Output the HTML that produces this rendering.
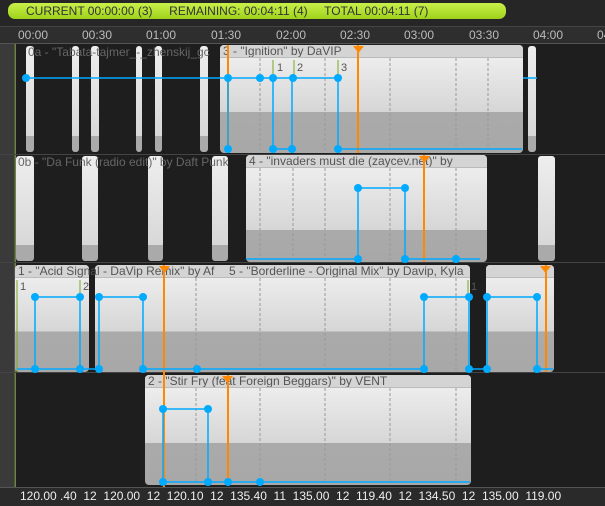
<!DOCTYPE html><html><head><style>
body{margin:0;width:605px;height:506px;background:#1e1e1e;overflow:hidden;font-family:"Liberation Sans","DejaVu Sans",sans-serif;position:relative}
div{position:absolute;box-sizing:border-box}
.c{border-radius:4px;background:linear-gradient(#f2f2f2,#d6d6d6 62%,#aaa 62%,#a8a8a8)}
.c.w2{background:linear-gradient(#f2f2f2,#d6d6d6 70%,#aaa 70%,#a8a8a8)}
.h{left:0;right:0;top:0;height:13px;background:#d4d4d4;border-bottom:1px solid #bbb;font-size:12px;color:#555;white-space:nowrap;overflow:hidden;line-height:13px;padding-left:3px;border-radius:4px 4px 0 0}
.t{background:linear-gradient(#eee,#d8d8d8 85%,#aaa 85%);border-radius:3px}
.rl{font-size:12px;color:#bbb;top:28px}
</style></head><body>
<div style="left:0;top:0;width:605px;height:26px;background:#262626"></div>
<div style="left:8px;top:3px;width:498px;height:16px;border-radius:7px;background:linear-gradient(#c8f04a,#9fd21a);font-size:12px;color:#333;line-height:16px;padding-left:18px;white-space:pre">CURRENT 00:00:00 (3)     REMAINING: 00:04:11 (4)     TOTAL 00:04:11 (7)</div>
<div style="left:0;top:26px;width:605px;height:18px;background:#2e2e2e;border-top:1px solid #444;border-bottom:1px solid #555"></div>
<div class="rl" style="left:18px">00:00</div><div class="rl" style="left:82px">00:30</div><div class="rl" style="left:146px">01:00</div><div class="rl" style="left:211px">01:30</div><div class="rl" style="left:276px">02:00</div><div class="rl" style="left:340px">02:30</div><div class="rl" style="left:404px">03:00</div><div class="rl" style="left:469px">03:30</div><div class="rl" style="left:533px">04:00</div><div class="rl" style="left:597px">04:30</div>
<div style="left:0;top:44px;width:15px;height:443px;background:#3a3a3a;border-right:1px solid #555"></div>
<div style="left:15px;top:44px;width:1px;height:443px;background:#6a8a2a"></div>
<div style="left:0;top:154px;width:605px;height:1px;background:#444"></div>
<div style="left:0;top:262px;width:605px;height:1px;background:#444"></div>
<div style="left:0;top:372px;width:605px;height:1px;background:#444"></div>
<div class="t" style="left:26px;top:46px;width:8px;height:106px"></div>
<div class="t" style="left:72px;top:46px;width:7px;height:106px"></div>
<div class="t" style="left:91px;top:46px;width:8px;height:106px"></div>
<div class="t" style="left:136px;top:46px;width:6px;height:106px"></div>
<div class="t" style="left:155px;top:46px;width:7px;height:106px"></div>
<div class="t" style="left:200px;top:46px;width:8px;height:106px"></div>
<div class="t" style="left:528px;top:46px;width:8px;height:106px"></div>
<div style="left:28px;top:45px;width:192px;font-size:12px;color:#666;white-space:nowrap;overflow:hidden">0a - "Tabata-tajmer_-_zhenskij_gc</div>
<div class="c" style="left:220px;top:45px;width:303px;height:108px"><div class="h">3 - "Ignition" by DaVIP</div></div>
<div class="t" style="left:16px;top:156px;width:18px;height:105px"></div>
<div class="t" style="left:82px;top:156px;width:16px;height:105px"></div>
<div class="t" style="left:148px;top:156px;width:15px;height:105px"></div>
<div class="t" style="left:212px;top:156px;width:16px;height:105px"></div>
<div class="t" style="left:538px;top:156px;width:17px;height:105px"></div>
<div style="left:18px;top:155px;width:228px;font-size:12px;color:#666;white-space:nowrap;overflow:hidden">0b - "Da Funk (radio edit)" by Daft Punk</div>
<div class="c w2" style="left:246px;top:155px;width:241px;height:107px"><div class="h">4 - "invaders must die (zaycev.net)" by</div></div>
<div class="c" style="left:15px;top:265px;width:74px;height:107px"><div class="h"></div></div>
<div class="c" style="left:95px;top:265px;width:375px;height:107px"><div class="h" style="padding-left:134px">5 - "Borderline - Original Mix" by Davip, Kyla</div></div>
<div style="left:18px;top:265px;width:211px;font-size:12px;color:#555;white-space:nowrap;overflow:hidden;line-height:13px">1 - "Acid Signal - DaVip Remix" by Af</div>
<div class="c" style="left:486px;top:265px;width:68px;height:107px"><div class="h"></div></div>
<div class="c" style="left:145px;top:375px;width:326px;height:110px"><div class="h">2 - "Stir Fry (feat Foreign Beggars)" by VENT</div></div>
<svg width="605" height="506" style="position:absolute;left:0;top:0" fill="#0af">
<g stroke="#999" stroke-dasharray="3,2" stroke-width="1">
<line x1="260" y1="58" x2="260" y2="150"/><line x1="325" y1="58" x2="325" y2="150"/><line x1="390" y1="58" x2="390" y2="150"/><line x1="456" y1="58" x2="456" y2="150"/><line x1="488" y1="58" x2="488" y2="150"/>
<line x1="260" y1="168" x2="260" y2="260"/><line x1="293" y1="168" x2="293" y2="260"/><line x1="325" y1="168" x2="325" y2="260"/><line x1="390" y1="168" x2="390" y2="260"/><line x1="456" y1="168" x2="456" y2="260"/>
<line x1="196" y1="278" x2="196" y2="370"/><line x1="260" y1="278" x2="260" y2="370"/><line x1="325" y1="278" x2="325" y2="370"/><line x1="390" y1="278" x2="390" y2="370"/><line x1="456" y1="278" x2="456" y2="370"/>
<line x1="196" y1="388" x2="196" y2="483"/><line x1="260" y1="388" x2="260" y2="483"/><line x1="325" y1="388" x2="325" y2="483"/><line x1="390" y1="388" x2="390" y2="483"/><line x1="456" y1="388" x2="456" y2="483"/>
</g>
<g stroke="#f80" stroke-width="2"><line x1="228" y1="45" x2="228" y2="153"/><line x1="358" y1="45" x2="358" y2="153"/><line x1="424" y1="155" x2="424" y2="262"/><line x1="164" y1="265" x2="164" y2="487"/><line x1="228" y1="375" x2="228" y2="485"/><line x1="546" y1="265" x2="546" y2="372"/></g>
<g fill="#f80"><path d="M353 46h11l-5.5 7z"/><path d="M419 156h11l-5.5 7z"/><path d="M159 266h11l-5.5 7z"/><path d="M222 376h11l-5.5 7z"/><path d="M540 266h11l-5.5 7z"/></g>
<g stroke="#7a2" stroke-width="1"><line x1="273" y1="60" x2="273" y2="78"/><line x1="294" y1="60" x2="294" y2="78"/><line x1="338" y1="60" x2="338" y2="78"/><line x1="17" y1="280" x2="17" y2="372"/><line x1="80" y1="280" x2="80" y2="300"/><line x1="468" y1="280" x2="468" y2="300"/></g>
<g font-size="11" fill="#555" font-family="Liberation Sans"><text x="277" y="71">1</text><text x="297" y="71">2</text><text x="341" y="71">3</text><text x="20" y="290">1</text><text x="83" y="290">2</text><text x="471" y="290">1</text></g>
<g stroke="#0af" stroke-width="1.5" fill="none">
<path d="M26 78H338V149M228 78V149M273 78V149H292V78M338 149H522M523 78H537"/>
<path d="M246 259H358V188H405V259H480M358 188V259"/>
<path d="M17 369H35V297H80V369H99V297H143V369H424V297H469V369H487V297H537V369H553M35 369H80"/>
<path d="M163 482V409H208V482H470M163 482H208"/>
</g>
<g><circle cx="26" cy="78" r="4"/><circle cx="228" cy="78" r="4"/><circle cx="260" cy="78" r="4"/><circle cx="273" cy="78" r="4"/><circle cx="293" cy="78" r="4"/><circle cx="338" cy="78" r="4"/><circle cx="228" cy="149" r="4"/><circle cx="273" cy="149" r="4"/><circle cx="292" cy="149" r="4"/><circle cx="338" cy="149" r="4"/>
<circle cx="358" cy="188" r="4"/><circle cx="405" cy="188" r="4"/><circle cx="358" cy="259" r="4"/><circle cx="405" cy="259" r="4"/><circle cx="456" cy="259" r="4"/>
<circle cx="35" cy="297" r="4"/><circle cx="80" cy="297" r="4"/><circle cx="35" cy="369" r="4"/><circle cx="80" cy="369" r="4"/><circle cx="99" cy="297" r="4"/><circle cx="143" cy="297" r="4"/><circle cx="99" cy="369" r="4"/><circle cx="143" cy="369" r="4"/><circle cx="197" cy="369" r="4"/><circle cx="424" cy="297" r="4"/><circle cx="469" cy="297" r="4"/><circle cx="424" cy="369" r="4"/><circle cx="469" cy="369" r="4"/><circle cx="487" cy="297" r="4"/><circle cx="537" cy="297" r="4"/><circle cx="487" cy="369" r="4"/><circle cx="537" cy="369" r="4"/>
<circle cx="163" cy="409" r="4"/><circle cx="208" cy="409" r="4"/><circle cx="163" cy="482" r="4"/><circle cx="208" cy="482" r="4"/><circle cx="228" cy="482" r="4"/><circle cx="260" cy="482" r="4"/></g>
</svg>
<div style="left:0;top:487px;width:605px;height:19px;background:#2a2a2a;border-top:1px solid #555"></div>
<div style="left:20px;top:489px;font-size:12px;color:#eee;white-space:pre">120.00 .40  12  120.00  12  120.10  12  135.40  11  135.00  12  119.40  12  134.50  12  135.00  119.00</div>
</body></html>
